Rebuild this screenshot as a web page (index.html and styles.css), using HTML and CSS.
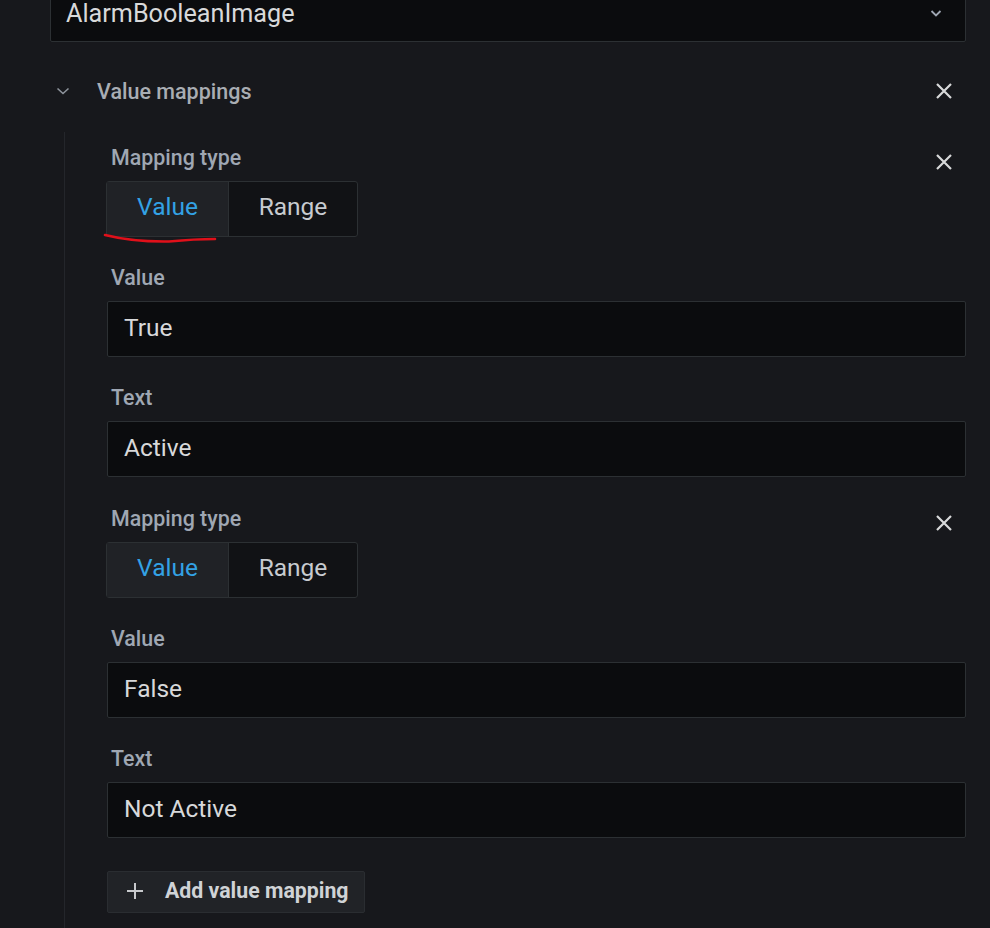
FILE: index.html
```html
<!DOCTYPE html>
<html>
<head>
<meta charset="utf-8">
<link rel="stylesheet" href="styles.css">
</head>
<body>
<div class="page">
  <div class="select">
    <span class="select-text">AlarmBooleanImage</span>
    <svg class="select-caret" width="16" height="16" viewBox="0 0 16 16"><path d="M3.5 6 L8 10.5 L12.5 6" fill="none" stroke="#9fa7b3" stroke-width="1.8"/></svg>
  </div>

  <div class="section-head">
    <svg class="head-caret" width="16" height="16" viewBox="0 0 16 16"><path d="M2.5 5.5 L8 10.5 L13.5 5.5" fill="none" stroke="#8e949c" stroke-width="1.6"/></svg>
    <span class="head-title">Value mappings</span>
    <svg class="close" width="22" height="22" viewBox="0 0 22 22"><path d="M4 4 L18 18 M18 4 L4 18" stroke="#d8d9da" stroke-width="2.2"/></svg>
  </div>

  <div class="section-body">
    <div class="mapping">
      <div class="mapping-head">
        <span class="label">Mapping type</span>
        <svg class="close close-map" width="22" height="22" viewBox="0 0 22 22"><path d="M4 4 L18 18 M18 4 L4 18" stroke="#d8d9da" stroke-width="2.2"/></svg>
      </div>
      <div class="radio">
        <span class="opt active">Value</span>
        <span class="opt">Range</span>
        <svg class="scribble" width="120" height="14" viewBox="0 0 120 14"><path d="M2 3 Q 30 10 66 9.5 Q 92 7 112 7" fill="none" stroke="#e0101a" stroke-width="2.6" stroke-linecap="round"/></svg>
      </div>
      <div class="label field-label">Value</div>
      <div class="input">True</div>
      <div class="label field-label">Text</div>
      <div class="input">Active</div>
    </div>

    <div class="mapping">
      <div class="mapping-head">
        <span class="label">Mapping type</span>
        <svg class="close close-map" width="22" height="22" viewBox="0 0 22 22"><path d="M4 4 L18 18 M18 4 L4 18" stroke="#d8d9da" stroke-width="2.2"/></svg>
      </div>
      <div class="radio">
        <span class="opt active">Value</span>
        <span class="opt">Range</span>
      </div>
      <div class="label field-label">Value</div>
      <div class="input">False</div>
      <div class="label field-label">Text</div>
      <div class="input">Not Active</div>
    </div>

    <div class="add-btn">
      <svg width="20" height="20" viewBox="0 0 20 20"><path d="M10 2 V18 M2 10 H18" stroke="#c7c9cc" stroke-width="2"/></svg>
      <span>Add value mapping</span>
    </div>
  </div>
</div>
</body>
</html>
```

FILE: styles.css
```css
html, body {
  margin: 0;
  padding: 0;
  background: #17181c;
  height: 100%;
  overflow: hidden;
}
body {
  font-family: Roboto, "Liberation Sans", sans-serif;
  color: #d8d9da;
}
.page {
  padding: 0 24px 0 50px;
}
.select {
  box-sizing: border-box;
  height: 58px;
  margin-top: -16px;
  border: 1px solid #2c3033;
  border-radius: 2px;
  background: #0b0c0e;
  display: flex;
  align-items: center;
  padding: 0 21px 0 15px;
  font-size: 25.2px;
}
.select-text {
  flex: 1;
  color: #d8d9da;
}
.section-head {
  display: flex;
  align-items: center;
  height: 50px;
  margin-top: 24px;
  padding-left: 5px;
  padding-right: 11px;
}
.head-caret {
  margin-right: 26px;
}
.head-title {
  flex: 1;
  font-size: 21.5px;
  font-weight: 500;
  color: #a9adb3;
}
.section-body {
  margin-left: 14px;
  margin-top: 16px;
  border-left: 1px solid #24262b;
  padding-left: 42px;
  padding-top: 12px;
  padding-bottom: 40px;
}
.mapping {
  margin-bottom: 28px;
}
.mapping-head {
  display: flex;
  align-items: flex-start;
  height: 28px;
  margin-bottom: 9px;
  padding-right: 11px;
}
.mapping-head .label {
  flex: 1;
}
.close-map {
  margin-top: 7px;
}
.label {
  font-size: 21.4px;
  font-weight: 500;
  color: #9fa7b3;
  line-height: 28px;
  padding-left: 4px;
}
.field-label {
  margin-top: 27px;
  margin-bottom: 9px;
}
.radio {
  position: relative;
  display: inline-flex;
  box-sizing: border-box;
  height: 56px;
  border: 1px solid #2c3033;
  border-radius: 3px;
  margin-left: -1px;
  background: #111215;
}
.opt {
  display: flex;
  align-items: center;
  justify-content: center;
  box-sizing: border-box;
  padding-bottom: 5px;
  font-size: 24.5px;
  color: #c7cbd0;
  width: 128px;
}
.opt.active {
  width: 122px;
  background: #202226;
  color: #33a2e5;
  border-right: 1px solid #2c3033;
}
.scribble {
  position: absolute;
  left: -4px;
  top: 50px;
}
.input {
  box-sizing: border-box;
  height: 56px;
  border: 1px solid #2c3033;
  border-radius: 2px;
  background: #0b0c0e;
  display: flex;
  align-items: center;
  padding-left: 16px;
  padding-bottom: 3px;
  font-size: 24.5px;
  color: #d8d9da;
}
.add-btn {
  display: inline-flex;
  align-items: center;
  box-sizing: border-box;
  height: 42px;
  margin-top: 5px;
  padding: 0 15px 3px 17px;
  background: #212327;
  border: 1px solid #2a2d31;
  border-radius: 2px;
  font-size: 21.3px;
  font-weight: 700;
  color: #d0d3d6;
}
.add-btn svg {
  margin-right: 20px;
}
```
